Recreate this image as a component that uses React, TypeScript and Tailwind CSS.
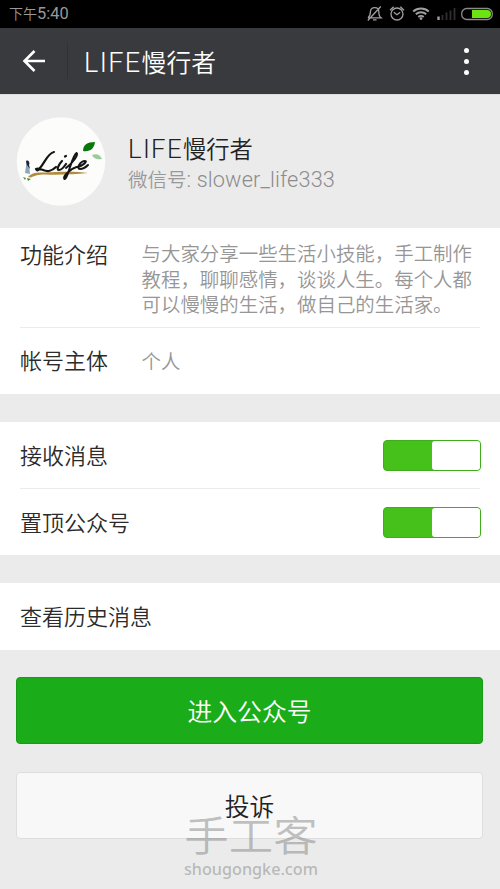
import React from 'react';

const fonts = "font-['Roboto','Noto_Sans_CJK_SC_DemiLight','Noto_Sans_CJK_SC',sans-serif]";

const StatusBar = () => (
    <div className="h-7 shrink-0 bg-black flex items-center justify-between pl-[9px] pr-[7px] text-[#999999]">
        <span className="flex items-baseline text-[14px] leading-7 whitespace-nowrap">下午<span className="text-[16.4px] font-normal">5:40</span></span>
        <svg width="128" height="28" viewBox="0 0 128 28" fill="none" stroke="#a0a0a0" strokeWidth="1.3">
            {/* muted bell */}
            <path d="M3 17.800h13c-2-1.500-2.200-3-2.200-6.300 0-5.200-8-5.200-8.300 0-.2 3.300-.5 4.800-2.500 6.300M8 19.800h3.500M2.800 20.500 15.800 6.500" />
            {/* alarm clock */}
            <circle cx="32" cy="14" r="6" />
            <path d="m28.800 12.300 3.200 2.500 3.200-2.500M25 10.300l3.700-3.500M39 10.300l-3.700-3.500" />
            {/* wifi */}
            <path d="M48.200 11.500a11.500 11.500 0 0 1 15.600 0M50.800 14.300a7.500 7.500 0 0 1 10.400 0M53.300 17a3.900 3.900 0 0 1 5.400 0" strokeWidth="1.900" />
            <circle cx="56" cy="18.600" r="1.400" fill="#a0a0a0" stroke="none" />
            {/* signal */}
            <path d="M73.500 20v-3.500" strokeWidth="2.400" />
            <path d="M77.500 20v-5M81.500 20v-7.500M85.500 20v-9.500M89.500 20V8" stroke="#303030" strokeWidth="1.800" />
            {/* battery */}
            <rect x="96.700" y="8.500" width="30.600" height="11" rx="5" stroke="#8a8a8a" />
            <path d="M107 10h15a4 4 0 0 1 0 8h-15z" fill="#6be411" stroke="none" />
        </svg>
    </div>
);

const TitleBar = () => (
    <div className="h-[67px] shrink-0 bg-[#393a3e] border-b border-[#dcdcdc] flex items-center text-white">
        <svg className="ml-[22px]" width="24" height="24" viewBox="0 0 24 24" fill="none" stroke="white" strokeWidth="2.600">
            <path d="M12.500 2 2.500 12l10 10M2.500 12H23" />
        </svg>
        <div className="ml-[21px] h-9 w-px bg-[#303135]" />
        <h1 className="ml-[16px] pt-1 flex items-baseline text-[24.8px] whitespace-nowrap">
            <span className="text-[27px] font-light tracking-[1.4px]">LIFE</span>慢行者
        </h1>
        <div className="ml-auto mr-[31px] flex flex-col gap-[6px]">
            <i className="size-[5px] rounded-full bg-white" />
            <i className="size-[5px] rounded-full bg-white" />
            <i className="size-[5px] rounded-full bg-white" />
        </div>
    </div>
);

const Avatar = () => (
    <svg className="shrink-0" width="90" height="90" viewBox="0 0 90 90">
        <circle cx="45" cy="44.500" r="44.300" fill="#fcfcfb" />
        <path d="M12 60c3-4 8-5 18-4.500 14-1 32-1 42 .5-14 1.500-30 2-43 1.500-7 0-10 1-14 3z" fill="#b48a3e" />
        <path d="M10 44c2-2 4 1 3 4l1 9-5-1 1-7z" fill="#8ba7bf" />
        <path d="M10 44c3-1 4 2 3 4l1 4-3-4z" fill="#20242c" />
        <path d="m7 60 3 1-1 2zM11 61l4 1-3 2z" fill="#448b3d" />
        {/* handwritten wordmark */}
        <g fill="none" stroke="#151515" strokeLinecap="round" strokeLinejoin="round">
            <path d="M38 35c-6 1-9 10-14 16-2 3-3 3-4 1 4-2 8 3 13 2 4-1 5-2 7-4" strokeWidth="2.200" />
            <path d="M46 44c-3 3-6 9-3 9s5-3 7-6M49 39.500l1-.5" strokeWidth="2.200" />
            <path d="M50 51c7-5 13-14 10.500-15-4 1-9 27-12 26-2-2 5-10 12-12" strokeWidth="2" />
            <path d="M61 50c6-1 11-6 8-6-5 0-9 8-5 8 3 0 6-2 8-4" strokeWidth="2" />
        </g>
        <path d="M67 34c0-6 4-9 12-9-1 7-5 10-12 9z" fill="#08780d" />
        <path d="M76 38c5-2 8 0 10 4-5 1-8 0-10-4z" fill="#9acb9c" />
    </svg>
);

const Toggle = () => (
    <div className="w-[98px] h-[31px] -mr-px shrink-0 rounded-[4px] border border-[#3eae1d] bg-[#46c01b] flex justify-end">
        <div className="w-[48px] rounded-[3px] bg-white" />
    </div>
);

const SwitchRow = ({ label }: { label: string }) => (
    <div className="h-[66px] flex items-center justify-between">
        <span className="pt-[2px]">{label}</span>
        <Toggle />
    </div>
);

export default function App() {
    return (
        <div className={`relative w-[500px] h-[889px] overflow-hidden flex flex-col bg-[#ebebeb] text-[#2b2b2b] text-[22px] font-[350] ${fonts}`}>
            <StatusBar />
            <TitleBar />

            {/* Account */}
            <div className="h-[133px] shrink-0 flex items-center pl-4 gap-[22px]">
                <Avatar />
                <div className="whitespace-nowrap pt-[4px]">
                    <div className="flex items-baseline text-[23.3px] leading-[31px] text-[#222222]">
                        <span className="text-[25.8px] font-light tracking-[1.3px]">LIFE</span>慢行者
                    </div>
                    <div className="flex items-baseline text-[19.5px] leading-[27px] text-[#999999]">
                        微信号<span className="text-[21.7px] font-light text-[#8c8c8c] tracking-[0.15px] whitespace-pre">: slower_life333</span>
                    </div>
                </div>
            </div>

            {/* Details */}
            <div className="h-[166px] shrink-0 bg-white px-5">
                <div className="h-[100px] border-b border-[#ebebeb] flex pt-[13px]">
                    <span className="w-[121.5px] shrink-0 leading-[30px]">功能介绍</span>
                    <p className="pt-px text-[19.45px] leading-[25.5px] text-[#969696] whitespace-nowrap">
                        与大家分享一些生活小技能，手工制作<br />
                        教程，聊聊感情，谈谈人生。每个人都<br />
                        可以慢慢的生活，做自己的生活家。
                    </p>
                </div>
                <div className="h-[66px] flex items-center pt-px">
                    <span className="w-[121.5px] shrink-0">帐号主体</span>
                    <span className="pt-[2px] text-[19.45px] text-[#969696]">个人</span>
                </div>
            </div>

            {/* Settings */}
            <div className="mt-7 h-[133px] shrink-0 bg-white px-5">
                <SwitchRow label="接收消息" />
                <div className="h-px bg-[#ebebeb]" />
                <SwitchRow label="置顶公众号" />
            </div>

            <div className="mt-7 h-[67px] shrink-0 bg-white px-5 pt-[2px] flex items-center">查看历史消息</div>

            {/* Actions */}
            <div className="mt-[27px] ml-4 mr-[17px] flex flex-col gap-7">
                <button className="h-[67px] pt-1 rounded-[4px] border border-[#179b16] bg-[#1aad19] text-white text-[24.8px]">进入公众号</button>
                <button className="h-[67px] pt-1 rounded-[4px] border border-[#dedede] bg-[#f8f8f8] text-[#222222] text-[24.8px]">投诉</button>
            </div>

            {/* Site watermark over the page bottom */}
            <div className="absolute left-[183px] top-[812px] w-[136px] text-center text-[#777777]/45 whitespace-nowrap">
                <div className="text-[44.5px] leading-[50px] font-medium scale-y-93">手工客</div>
                <div className="font-['Noto_Sans',sans-serif] text-[16.2px] leading-[14px] font-medium">shougongke.com</div>
            </div>
        </div>
    );
}
